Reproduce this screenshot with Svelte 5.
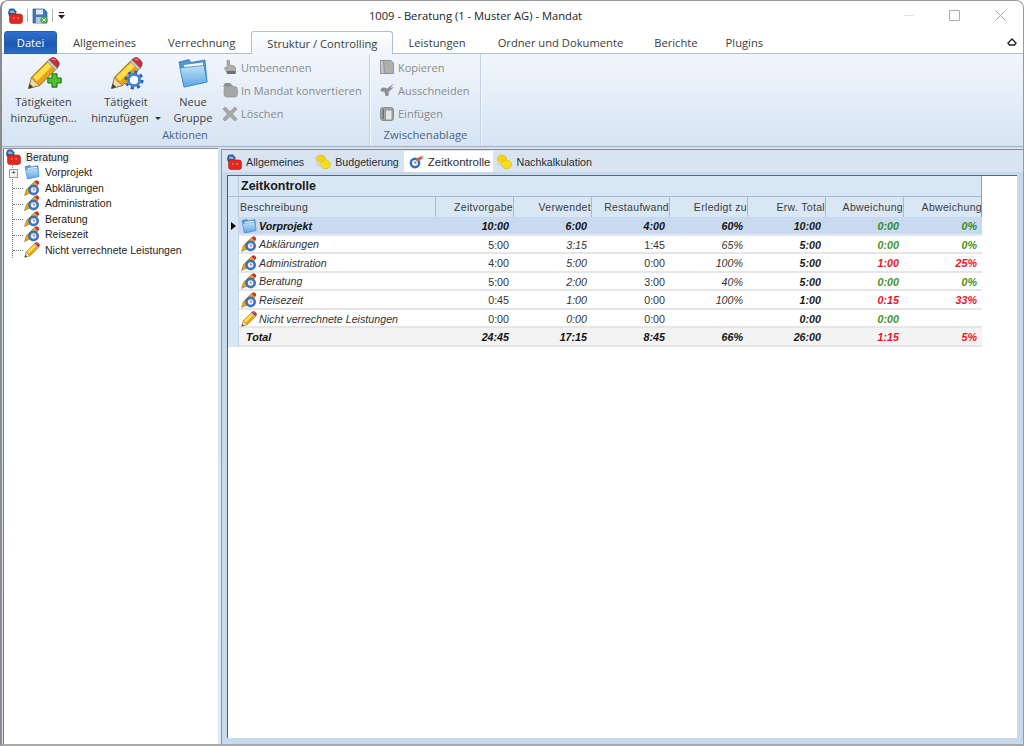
<script>
    const mainTabs = ['Allgemeines', 'Verrechnung', 'Struktur / Controlling', 'Leistungen', 'Ordner und Dokumente', 'Berichte', 'Plugins'];
    const tree = [
        { label: 'Abklärungen', icon: 'task' },
        { label: 'Administration', icon: 'task' },
        { label: 'Beratung', icon: 'task' },
        { label: 'Reisezeit', icon: 'task' },
        { label: 'Nicht verrechnete Leistungen', icon: 'pencil' },
    ];
    const columns = ['Zeitvorgabe', 'Verwendet', 'Restaufwand', 'Erledigt zu', 'Erw. Total', 'Abweichung', 'Abweichung'];
    const rows = [
        { kind: 'sel', icon: 'folder', name: 'Vorprojekt', v: ['10:00', '6:00', '4:00', '60%', '10:00', '0:00', '0%'], over: false },
        { icon: 'task', name: 'Abklärungen', v: ['5:00', '3:15', '1:45', '65%', '5:00', '0:00', '0%'], over: false },
        { icon: 'task', name: 'Administration', v: ['4:00', '5:00', '0:00', '100%', '5:00', '1:00', '25%'], over: true },
        { icon: 'task', name: 'Beratung', v: ['5:00', '2:00', '3:00', '40%', '5:00', '0:00', '0%'], over: false },
        { icon: 'task', name: 'Reisezeit', v: ['0:45', '1:00', '0:00', '100%', '1:00', '0:15', '33%'], over: true },
        { icon: 'pencil', name: 'Nicht verrechnete Leistungen', v: ['0:00', '0:00', '0:00', '', '0:00', '0:00', ''], over: false },
        { kind: 'total', icon: '', name: 'Total', v: ['24:45', '17:15', '8:45', '66%', '26:00', '1:15', '5%'], over: true },
    ];
</script>

{#snippet bag(size)}
    <svg width={size} height={size} viewBox="0 0 16 16">
        <path d="M1 5 L2 1.5 Q2.5 .5 4 .5 H7 L9.5 3.5 L9 8 H2Z" fill="#2f5f9e" />
        <path d="M3 2.5 H6.5 L8 5 H3.5Z" fill="#8fb4dc" />
        <rect x="2.5" y="6" width="13" height="9.5" rx="2.5" fill="#e3271f" stroke="#a81c16" stroke-width=".6" />
        <rect x="6" y="9.5" width="1.6" height="1" fill="#ffb8a8" /><rect x="10.4" y="9.5" width="1.6" height="1" fill="#ffb8a8" />
    </svg>
{/snippet}

{#snippet pencil(size)}
    <svg width={size} height={size} viewBox="0 0 32 32">
        <path d="M1.5 30.5 L4.5 19.5 L21 3 L29 11 L12.5 27.5Z" fill="#e9a215" stroke="#7d5c10" stroke-width=".8" />
        <path d="M6 19.5 L21.5 4.5 L25 8 L9.5 23.5Z" fill="#ffe04a" />
        <path d="M1.5 30.5 L4.5 19.5 L7.5 24 L12.5 27.5Z" fill="#efd9ae" stroke="#8a6a30" stroke-width=".6" />
        <path d="M1.5 30.5 L2.7 26 L6 29.3Z" fill="#3a3a3a" />
        <path d="M19.5 4.5 L21.5 2.5 L29.5 10.5 L27.5 12.5Z" fill="#c8c8c8" stroke="#777" stroke-width=".5" />
        <path d="M21.5 2.5 L24 .8 Q26.5 0 28.5 2 L30.2 3.8 Q32 6 31 8 L29.5 10.5Z" fill="#c4303c" stroke="#7c1c22" stroke-width=".6" />
        <path d="M24 2.5 Q26 1.5 27.5 3" stroke="#f0a0a0" stroke-width="1" fill="none" />
    </svg>
{/snippet}

{#snippet task()}
    <svg width="16" height="16" viewBox="0 0 16 16">
        <path d="M.5 15.5 L2.5 9.5 L10.5 1.5 L14 5 L6 13Z" fill="#e8a81c" stroke="#7d5a10" stroke-width=".5" />
        <path d="M10.5 1.5 L12 .4 Q13 0 14.4 1.2 Q15.6 2.6 15 3.6 L14 5Z" fill="#c9303a" />
        <circle cx="9.6" cy="10" r="5" fill="#3a78c8" stroke="#1e4f94" stroke-width=".6" />
        <circle cx="9.6" cy="10" r="2.8" fill="#e9f1fb" />
        <path d="M9.6 8.5 V10 H11" stroke="#c9303a" stroke-width=".8" fill="none" />
    </svg>
{/snippet}

{#snippet folder(w, h)}
    <svg width={w} height={h} viewBox="0 0 32 32">
        <defs>
            <linearGradient id="fold" x1="0" y1="0" x2="0" y2="1">
                <stop offset="0" stop-color="#bfe0f8" />
                <stop offset="1" stop-color="#5ca6e2" />
            </linearGradient>
        </defs>
        <path d="M2 5 L12 2.5 L14 5.5 L28 3 L30 25 L7 30Z" fill="#4f97d6" stroke="#2f78bc" stroke-width=".8" />
        <path d="M7 8 L26 5.5 L27 19 L9 22Z" fill="#f1f8fe" />
        <path d="M3 11 L27 8.5 L30 25 L7 30Z" fill="url(#fold)" stroke="#3d8cd0" stroke-width=".8" />
    </svg>
{/snippet}

{#snippet grey(kind)}
    <svg width="16" height="16" viewBox="0 0 16 16" fill="#9a9a9a">
        {#if kind === 'hand'}
            <path d="M5 1.5 Q6.5 .3 7.5 1.5 V6 L12 7 Q14 8 13.5 10 V14 H5 L2.5 9 Q3 7.5 5 9 Z" fill="#b0b0b0" stroke="#808080" stroke-width=".6" />
            <rect x="5" y="12" width="8.5" height="3" fill="#6e6e6e" />
        {:else if kind === 'bag'}
            <path d="M1 5 L3 1 H8 L11 4Z" fill="#8e8e8e" />
            <rect x="2" y="4.5" width="13.5" height="10.5" rx="3" fill="#a6a6a6" stroke="#8c8c8c" stroke-width=".6" />
        {:else if kind === 'x'}
            <path d="M1 3 L3 1 L8 5.5 L13 1 L15 3 L10.5 8 L15 13 L13 15 L8 10.5 L3 15 L1 13 L5.5 8Z" fill="#a8a8a8" stroke="#8a8a8a" stroke-width=".6" />
        {:else if kind === 'copy'}
            <rect x="1.5" y="1.5" width="10" height="13" fill="#c4c4c4" stroke="#888" stroke-width=".8" />
            <path d="M4.5 1.5 H12 L14.5 4 V14.5 H5.5Z" fill="#b0b0b0" stroke="#888" stroke-width=".8" />
        {:else if kind === 'cut'}
            <path d="M15 1.5 L8 6.5 L5.5 5.5 Q2 5 1.5 8 Q2 10.5 5 9.5 L6 11 Q5.5 14.5 8.5 14 Q10.5 13 9.5 10 L15 5 L11.5 6Z" fill="#8f8f8f" />
        {:else}
            <rect x="1.5" y="1.5" width="13" height="13" rx="2.5" fill="#a8a8a8" stroke="#7e7e7e" stroke-width=".8" />
            <rect x="6.5" y="4" width="6.5" height="10" fill="#e4e4e4" stroke="#808080" stroke-width=".7" />
            <rect x="3.5" y="3" width="1.5" height="10" fill="#6e6e6e" />
        {/if}
    </svg>
{/snippet}

{#snippet coins()}
    <svg width="16" height="16" viewBox="0 0 16 16">
        <ellipse cx="6" cy="5" rx="4.6" ry="4" fill="#f5d21a" stroke="#d9b414" stroke-width=".6" />
        <ellipse cx="10.5" cy="10.5" rx="5" ry="4.4" fill="#f8dc1e" stroke="#d9b414" stroke-width=".6" />
        <ellipse cx="3.6" cy="10" rx="2.6" ry="2" fill="#d8d4c0" />
    </svg>
{/snippet}

{#snippet clock()}
    <svg width="16" height="16" viewBox="0 0 16 16">
        <circle cx="7" cy="9" r="5.4" fill="#2f6fc0" />
        <circle cx="7" cy="9" r="3" fill="#eef4fb" />
        <path d="M8 5 L14 1.5 L15.5 4 L9 8Z" fill="#d8603f" />
        <path d="M12 3 L15.5 1.5 V4Z" fill="#b9c6d6" />
        <path d="M7 7.5 V9 H8.5" stroke="#333" stroke-width=".8" fill="none" />
    </svg>
{/snippet}

{#snippet rowIcon(name)}
    {#if name === 'task'}{@render task()}
    {:else if name === 'pencil'}{@render pencil(16)}
    {:else if name === 'folder'}{@render folder(16, 16)}
    {/if}
{/snippet}

<div class="window">
    <header class="titlebar">
        <div class="qat">
            {@render bag(16)}
            <span class="qsep"></span>
            <svg width="16" height="16" viewBox="0 0 16 16">
                <path d="M1 1 H12 L15 4 V15 H1Z" fill="#3c79bf" stroke="#2a5a94" stroke-width=".7" />
                <rect x="4" y="1.5" width="7" height="5" fill="#dfeaf6" />
                <rect x="4" y="9" width="8" height="6" fill="#b9c9dc" />
                <circle cx="12" cy="12" r="3.6" fill="#45a845" />
                <path d="M10.3 10.5 L13.7 13.5 M13.7 10.5 L10.3 13.5" stroke="#fff" stroke-width="1" />
            </svg>
            <span class="qsep"></span>
            <svg class="qmore" width="7" height="8" viewBox="0 0 7 8"><rect x="1" y="0" width="5" height="1.2" fill="#222" /><path d="M0 3 H7 L3.5 7Z" fill="#222" /></svg>
        </div>
        <div class="title">1009 - Beratung (1 - Muster AG) - Mandat</div>
        <div class="winbtns">
            <span class="min"></span>
            <span class="max"></span>
            <svg width="11" height="11" viewBox="0 0 11 11"><path d="M.5 .5 L10.5 10.5 M10.5 .5 L.5 10.5" stroke="#a8a8a8" stroke-width="1" /></svg>
        </div>
    </header>

    <nav class="tabrow">
        <button class="file">Datei</button>
        {#each mainTabs as t, i}
            <button class="mtab" class:active={i === 2}>{t}</button>
        {/each}
        <svg class="collapse" width="10" height="8" viewBox="0 0 10 8"><path d="M1 5 L5 1 L9 5 L7.5 7 H2.5Z" fill="none" stroke="#222" stroke-width="1.4" /></svg>
    </nav>

    <section class="ribbon">
        <div class="group actions">
            <div class="group-body">
                <button class="big first">
                    <span class="bigicon">
                        {@render pencil(33)}
                        <svg class="badge" width="15" height="15" viewBox="0 0 18 18"><path d="M6 1 H12 V6 H17 V12 H12 V17 H6 V12 H1 V6 H6Z" fill="#4cc22d" stroke="#1f6a16" stroke-width="1.2" /></svg>
                    </span>
                    <span>Tätigkeiten<br />hinzufügen...</span>
                </button>
                <button class="big second">
                    <span class="bigicon">
                        {@render pencil(33)}
                        <svg class="badge gear" width="20" height="20" viewBox="0 0 20 20">
                            <circle cx="10" cy="10" r="8" fill="none" stroke="#2b62ad" stroke-width="3" stroke-dasharray="3.14" />
                            <circle cx="10" cy="10" r="5.6" fill="none" stroke="#3f86d8" stroke-width="3" />
                            <circle cx="10" cy="10" r="4" fill="#fff" />
                        </svg>
                    </span>
                    <span>Tätigkeit<br />hinzufügen <i class="drop"></i></span>
                </button>
                <button class="big third">
                    <span class="bigicon">{@render folder(32, 32)}</span>
                    <span>Neue<br />Gruppe</span>
                </button>
                <div class="smalls">
                    <div class="small">{@render grey('hand')}<span>Umbenennen</span></div>
                    <div class="small">{@render grey('bag')}<span>In Mandat konvertieren</span></div>
                    <div class="small">{@render grey('x')}<span>Löschen</span></div>
                </div>
            </div>
            <div class="group-label label-actions">Aktionen</div>
        </div>
        <div class="group clip">
            <div class="smalls">
                <div class="small">{@render grey('copy')}<span>Kopieren</span></div>
                <div class="small">{@render grey('cut')}<span>Ausschneiden</span></div>
                <div class="small">{@render grey('paste')}<span>Einfügen</span></div>
            </div>
            <div class="group-label">Zwischenablage</div>
        </div>
    </section>

    <main class="main">
        <aside class="tree">
            <div class="node root">{@render bag(16)}<span class="rootlabel">Beratung</span></div>
            <div class="children">
                <div class="node child first-child">
                    <span class="plus">+</span>
                    <span class="ticon">{@render folder(16, 16)}</span>
                    <span>Vorprojekt</span>
                </div>
                {#each tree as n}
                    <div class="node child">
                        <span class="dash"></span>
                        <span class="ticon">{@render rowIcon(n.icon)}</span>
                        <span>{n.label}</span>
                    </div>
                {/each}
            </div>
        </aside>

        <div class="content">
            <div class="ctabs">
                <div class="ctab">{@render bag(16)}<span>Allgemeines</span></div>
                <div class="ctab">{@render coins()}<span>Budgetierung</span></div>
                <div class="ctab on">{@render clock()}<span>Zeitkontrolle</span></div>
                <div class="ctab">{@render coins()}<span>Nachkalkulation</span></div>
            </div>
            <div class="sheet">
                <div class="grid">
                    <div class="gridtitle"><span class="corner"></span><strong>Zeitkontrolle</strong></div>
                    <div class="row head">
                        <span class="corner"></span>
                        <span class="cell name">Beschreibung</span>
                        {#each columns as c}<span class="cell num">{c}</span>{/each}
                    </div>
                    {#each rows as r}
                        <div class="row body {r.kind ?? ''}">
                            <span class="corner">{#if r.kind === 'sel'}<i class="arrow"></i>{/if}</span>
                            <span class="cell name">
                                <span class="ricon">{@render rowIcon(r.icon)}</span>
                                <em>{r.name}</em>
                            </span>
                            {#each r.v as val, i}
                                <span
                                    class="cell num"
                                    class:it={i === 0 ? false : i !== 2}
                                    class:strong={i === 4}
                                    class:dev={i >= 5}
                                    class:over={i >= 5 && r.over}
                                >{val}</span>
                            {/each}
                        </div>
                    {/each}
                </div>
            </div>
        </div>
    </main>
</div>

<style>
    :global(body) { margin: 0; background: #fff; }

    .window {
        width: 1024px;
        height: 746px;
        box-sizing: border-box;
        display: flex;
        flex-direction: column;
        background: #c9d9ec;
        border: 1px solid #9a9a9a;
        border-left: 2px solid #8c8c8c;
        border-bottom: 2px solid #a8a8a8;
        border-radius: 8px 8px 0 0;
        overflow: hidden;
        font-family: "Liberation Sans", Arial, sans-serif;
        font-size: 11px;
        color: #222;
    }

    button { font: inherit; background: none; border: 0; padding: 0; color: inherit; }

    .titlebar {
        height: 29px;
        flex: none;
        display: flex;
        align-items: center;
        background: #fff;
        position: relative;
    }
    .qat { display: flex; align-items: center; gap: 4px; padding-left: 5px; }
    .qsep { width: 1px; height: 13px; background: #b0b0b0; }
    .qmore { margin-left: 1px; }
    .title {
        position: absolute;
        left: 0;
        right: 0;
        padding-right: 74px;
        text-align: center;
        font-family: "Open Sans", sans-serif;
        font-size: 11.2px;
        color: #222;
    }
    .winbtns { margin-left: auto; display: flex; align-items: center; gap: 35px; padding-right: 17px; }
    .min { width: 10px; height: 1px; background: #e4e4e4; }
    .max { width: 9px; height: 9px; border: 1px solid #a8a8a8; border-radius: 1px; }

    .tabrow {
        height: 24px;
        flex: none;
        box-sizing: border-box;
        display: flex;
        align-items: flex-end;
        background: #fff;
        border-bottom: 1px solid #a9c0dc;
        padding-left: 2px;
        position: relative;
        font-family: "Open Sans", sans-serif;
        font-size: 11.2px;
        color: #3c3c3c;
    }
    .file {
        width: 53px;
        height: 23px;
        margin-bottom: -1px;
        border-radius: 3px 3px 0 0;
        background: linear-gradient(#2f6fcf, #1d58b4 60%, #2a6cc6);
        border: 1px solid #2a5ea8;
        box-sizing: border-box;
        color: #fff;
    }
    .mtab { height: 22px; padding: 0 16px; white-space: nowrap; }
    .mtab.active {
        height: 23px;
        margin-bottom: -1px;
        padding: 0 15px;
        box-sizing: border-box;
        background: linear-gradient(#fff, #eef5fc);
        border: 1px solid #a9c0dc;
        border-bottom: 0;
        border-radius: 3px 3px 0 0;
    }
    .mtab:nth-of-type(5), .mtab:nth-of-type(7) { margin-left: -1px; }
    .mtab:nth-of-type(8) { margin-left: -4px; }
    .collapse { position: absolute; right: 6px; top: 8px; }

    .ribbon {
        height: 93px;
        flex: none;
        box-sizing: border-box;
        display: flex;
        background: linear-gradient(#f1f6fc, #e1ebf7 60%, #d7e4f3);
        border-bottom: 1px solid #9fb0c4;
        font-family: "Open Sans", sans-serif;
        font-size: 11px;
        color: #3c3c3c;
    }
    .group {
        display: flex;
        flex-direction: column;
        border-right: 1px solid #c3d2e4;
        box-shadow: 1px 0 0 #f2f7fc;
        position: relative;
    }
    .actions { width: 367px; }
    .clip { width: 110px; padding-left: 8px; box-sizing: border-box; margin-left: 1px; }
    .group-body { display: flex; height: 79px; }
    .group-label {
        height: 15px;
        line-height: 15px;
        text-align: center;
        color: #4a6484;
        font-size: 11px;
    }
    .label-actions { width: 190px; margin-left: 88px; margin-top: -6px; }
    .clip .group-label { margin-left: -8px; margin-top: -6px; font-size: 11.3px; }
    .clip .smalls { height: 79px; box-sizing: border-box; }
    .big {
        display: flex;
        flex-direction: column;
        align-items: center;
        line-height: 15.5px;
        padding-top: 3px;
        white-space: nowrap;
    }
    .bigicon { position: relative; display: block; height: 37px; margin-bottom: 0; }
    .badge { position: absolute; right: -2px; bottom: 6px; }
    .badge.gear { right: -1px; bottom: 4px; }
    .first { width: 83px; }
    .second { width: 82px; }
    .third { width: 48px; margin-left: 2px; }
    .drop {
        display: inline-block;
        border: 3px solid transparent;
        border-top: 3px solid #333;
        border-bottom: 0;
        margin-left: 3px;
        vertical-align: 2px;
    }
    .smalls {
        display: flex;
        flex-direction: column;
        padding-top: 5px;
        gap: 7.4px;
        margin-left: 5px;
    }
    .clip .smalls { margin-left: 0; }
    .small { display: flex; align-items: center; gap: 3px; height: 16px; color: #8a8a8a; white-space: nowrap; }

    .main {
        flex: 1;
        min-height: 0;
        display: flex;
        padding-top: 1px;
        background: linear-gradient(#d5e1ef, #dfe9f5);
    }
    .tree {
        width: 215px;
        flex: none;
        box-sizing: border-box;
        margin-left: 1px;
        padding: 0 0 0 1px;
        background: #fff;
        border-top: 1px solid #8c8c8c;
        border-left: 1px solid #777;
        font-size: 10.5px;
        color: #1c1c1c;
    }
    .node { display: flex; align-items: center; height: 15.5px; white-space: nowrap; }
    .root { gap: 3px; }
    .rootlabel { background: #f2f2f2; padding: 0 2px; }
    .children { margin-left: 7px; border-left: 1px dotted #777; height: 93px; }
    .child { position: relative; padding-left: 3px; gap: 5px; }
    .dash { position: absolute; left: 0; top: 8px; width: 10px; border-top: 1px dotted #777; }
    .plus {
        position: absolute;
        left: -4px;
        top: 4px;
        width: 7px;
        height: 7px;
        line-height: 6px;
        font-size: 8px;
        text-align: center;
        background: #f4f4f4;
        border: 1px solid #9a9a9a;
    }
    .ticon { margin-left: 8px; display: flex; }

    .content {
        flex: 1;
        min-width: 0;
        display: flex;
        flex-direction: column;
        margin: 1px 0 0 3px;
        border-left: 1px solid #8c9aac;
        border-top: 1px solid #8c8c8c;
        background: #c9d9ec;
    }
    .ctabs {
        display: flex;
        align-items: flex-end;
        height: 22px;
        flex: none;
        background: #d8e4f2;
    }
    .ctab {
        display: flex;
        align-items: center;
        gap: 4px;
        height: 21px;
        padding: 0 5px 0 4px;
        color: #2c2c2c;
        font-size: 10.7px;
    }
    .ctab:first-child { padding-right: 7px; }
    .ctab.on { background: #fff; padding: 0 3px 0 4px; font-size: 11.5px; }
    .ctab.on + .ctab { padding-left: 3px; }
    .sheet {
        flex: 1;
        min-height: 0;
        margin: 3px 6px 6px 5px;
        background: #fff;
        border-top: 1px solid #56677c;
        border-left: 1px solid #4a5868;
    }
    .grid { width: 754px; }
    .corner {
        width: 11px;
        flex: none;
        align-self: stretch;
        box-sizing: border-box;
        background: #d9e6f4;
        border-right: 1px solid #b9c8da;
        display: flex;
        align-items: center;
        justify-content: center;
    }
    .gridtitle {
        display: flex;
        height: 21px;
        box-sizing: border-box;
        background: #d9e6f4;
        border-right: 1px solid #8ea0b8;
        border-bottom: 1px solid #a8bbd2;
        font-size: 12.5px;
        line-height: 21px;
        color: #1a1a1a;
    }
    .gridtitle strong { padding-left: 2px; }
    .row { display: flex; box-sizing: border-box; }
    .head {
        height: 20px;
        line-height: 20px;
        background: #d9e6f4;
        border-right: 1px solid #8ea0b8;
        color: #3c3c3c;
        font-size: 10.5px;
        letter-spacing: .32px;
    }
    .head .cell { border-right: 1px solid #a8bbd2; padding-right: 0; }
    .head .cell:last-child { border-right: 0; }
    .head .name { padding-left: 1px; }
    .cell { flex: none; box-sizing: border-box; white-space: nowrap; overflow: hidden; }
    .name { width: 197px; display: flex; align-items: center; }
    .num { width: 78px; text-align: right; }

    .body {
        height: 18.57px;
        border-bottom: 2px solid #e6e6e6;
        font-size: 10.7px;
        background: #fff;
        color: #333;
    }
    .body .cell { overflow: visible; line-height: 18px; }
    .body .name { padding-top: 1px; }
    .body .corner { margin-bottom: -2px; border-right: 1px solid #c4d2e2; }
    .body .num { padding-right: 5px; }
    .ricon { display: flex; width: 20px; padding-left: 2px; box-sizing: border-box; }
    .it { font-style: italic; }
    .strong { font-weight: 700; font-style: italic; color: #1a1a1a; }
    .dev { font-style: italic; font-weight: 700; color: #3f9428; }
    .dev.over { color: #f2101f; }

    .sel { background: #c9daf0; border-bottom-color: #dfe8f3; color: #111; font-weight: 700; font-style: italic; }
    .sel .dev { color: #2f8a2f; }
    .total { background: #f3f3f3; color: #111; font-weight: 700; font-style: italic; }
    .total em { padding-left: 7px; }
    .total .ricon { width: 0; padding: 0; }
    .arrow {
        border-left: 5px solid #000;
        border-top: 4.5px solid transparent;
        border-bottom: 4.5px solid transparent;
    }
</style>
